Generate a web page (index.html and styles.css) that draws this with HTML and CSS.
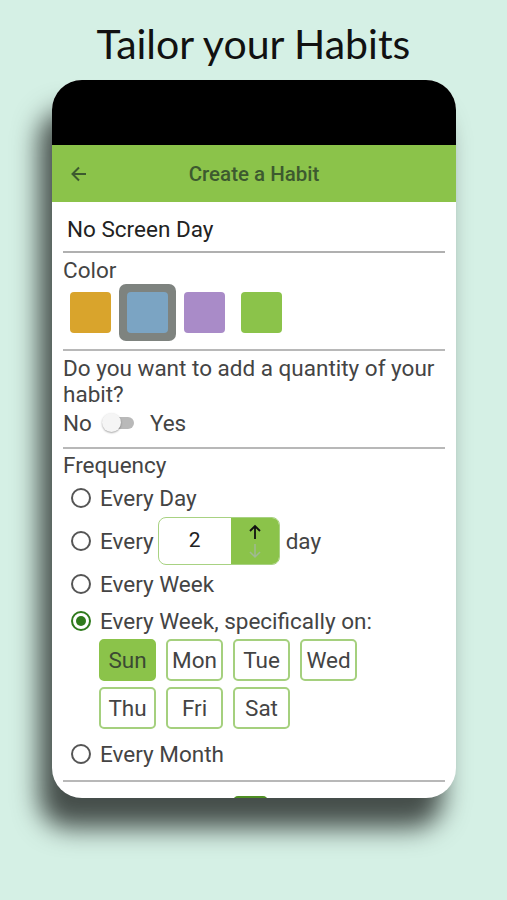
FILE: index.html
```html
<!DOCTYPE html>
<html>
<head>
<meta charset="utf-8">
<link rel="stylesheet" href="styles.css">
</head>
<body>
<h1 class="title">Tailor your Habits</h1>
<div class="phone">
  <div class="status"></div>
  <div class="appbar">
    <svg class="back" width="20" height="20" viewBox="0 0 20 20"><path d="M17 10H4M10 3.5L3.5 10L10 16.5" fill="none" stroke="#3d5a2f" stroke-width="2"/></svg>
    <span class="appbar-title">Create a Habit</span>
  </div>
  <div class="content">
    <div class="name-row">No Screen Day</div>
    <div class="section color-section">
      <div class="label">Color</div>
      <div class="swatches">
        <div class="swatch yellow"></div>
        <div class="swatch-sel"><div class="swatch blue"></div></div>
        <div class="swatch purple"></div>
        <div class="swatch green"></div>
      </div>
    </div>
    <div class="section qty-section">
      <div class="label">Do you want to add a quantity of your habit?</div>
      <div class="toggle-row">
        <span>No</span>
        <span class="switch"><span class="track"></span><span class="thumb"></span></span>
        <span>Yes</span>
      </div>
    </div>
    <div class="section freq-section">
      <div class="label">Frequency</div>
      <div class="radio-row r1"><span class="radio"></span>Every Day</div>
      <div class="radio-row r2"><span class="radio"></span>Every
        <span class="spinner"><span class="spin-val">2</span><span class="spin-btns">
          <svg width="14" height="16" viewBox="0 0 14 16"><path d="M7 15V2M2 7L7 2L12 7" fill="none" stroke="#111" stroke-width="1.8"/></svg>
          <svg width="14" height="16" viewBox="0 0 14 16"><path d="M7 1V14M2 9L7 14L12 9" fill="none" stroke="#a0b894" stroke-width="1.5"/></svg>
        </span></span>
        day</div>
      <div class="radio-row r3"><span class="radio"></span>Every Week</div>
      <div class="radio-row r4"><span class="radio checked"></span>Every Week, specifically on:</div>
      <div class="days">
        <span class="day on">Sun</span>
        <span class="day">Mon</span>
        <span class="day">Tue</span>
        <span class="day">Wed</span>
        <span class="day">Thu</span>
        <span class="day">Fri</span>
        <span class="day">Sat</span>
      </div>
      <div class="radio-row r5"><span class="radio"></span>Every Month</div>
    </div>
    <div class="peek"></div>
  </div>
</div>
</body>
</html>
```
FILE: styles.css
```css
html, body {
  margin: 0;
  padding: 0;
}
body {
  background: #d5f0e5;
  width: 507px;
  height: 900px;
  overflow: hidden;
  font-family: Roboto, "Liberation Sans", sans-serif;
}
.title {
  margin: 0;
  padding-top: 20px;
  height: 59px;
  box-sizing: border-box;
  text-align: center;
  font-family: Lato, "Open Sans", sans-serif;
  font-weight: 400;
  font-size: 41px;
  line-height: 48px;
  color: #111;
}
.phone {
  margin-left: 52px;
  margin-top: 21px;
  width: 404px;
  height: 718px;
  border-radius: 30px;
  overflow: hidden;
  background: #fff;
  box-shadow: -13px 30px 26px rgba(0, 0, 0, 0.68);
}
.status {
  height: 65px;
  background: #000;
}
.appbar {
  height: 57px;
  background: #8bc34a;
  display: flex;
  align-items: center;
  position: relative;
}
.back {
  margin-left: 17px;
}
.appbar-title {
  position: absolute;
  left: 0;
  right: 0;
  text-align: center;
  font-size: 20.5px;
  font-weight: 500;
  color: #3d5a2f;
  pointer-events: none;
}
.content {
  padding: 0 11px;
  color: #444;
  font-size: 22.5px;
  position: relative;
  height: 596px;
}
.name-row {
  height: 49px;
  line-height: 54px;
  padding-left: 4px;
  color: #222;
  border-bottom: 2px solid #b0b0b0;
}
.section {
  border-bottom: 2px solid #b8b8b8;
}
.label {
  line-height: 26px;
}
.color-section {
  height: 98px;
  padding-top: 4px;
  box-sizing: border-box;
}
.swatches {
  display: flex;
  align-items: center;
  gap: 8px;
  padding-left: 7px;
  margin-top: 1px;
}
.swatch {
  width: 41px;
  height: 41px;
  border-radius: 4px;
}
.swatch-sel {
  width: 41px;
  height: 41px;
  padding: 8px;
  border-radius: 7px;
  background: #7e837f;
}
.swatch-sel .swatch {
  width: 41px;
  height: 41px;
}
.yellow { background: #d9a42c; }
.blue { background: #7ba4c3; }
.purple { background: #a98bc8; }
.green { background: #8bc34a; margin-left: 8px; }
.qty-section {
  height: 98px;
  padding-top: 4px;
  box-sizing: border-box;
}
.toggle-row {
  display: flex;
  align-items: center;
  height: 30px;
  margin-top: 1px;
}
.switch {
  position: relative;
  width: 34px;
  height: 20px;
  margin: 0 14px 0 10px;
}
.track {
  position: absolute;
  left: 6px;
  top: 4px;
  width: 26px;
  height: 12px;
  border-radius: 6px;
  background: #b9b9b9;
}
.thumb {
  position: absolute;
  left: 0;
  top: 0;
  width: 19px;
  height: 19px;
  border-radius: 50%;
  background: #f5f5f5;
  box-shadow: 0 1px 2px rgba(0, 0, 0, 0.35);
}
.freq-section {
  height: 333px;
  padding-top: 3px;
  box-sizing: border-box;
}
.radio-row {
  display: flex;
  align-items: center;
  padding-left: 8px;
  height: 34px;
}
.radio {
  width: 16px;
  height: 16px;
  border: 2px solid #555;
  border-radius: 50%;
  margin-right: 9px;
  position: relative;
  flex: none;
}
.radio.checked {
  border-color: #2f7a1c;
}
.radio.checked::after {
  content: "";
  position: absolute;
  left: 3px;
  top: 3px;
  width: 10px;
  height: 10px;
  border-radius: 50%;
  background: #2f7a1c;
}
.r1 { margin-top: 3px; }
.r2 { height: 50px; margin-top: 1px; }
.r3 { margin-top: 1px; }
.r4 { margin-top: 3px; }
.spinner {
  display: flex;
  width: 122px;
  height: 48px;
  margin: 0 6px 0 4px;
  border: 1.5px solid #a8d282;
  border-radius: 8px;
  box-sizing: border-box;
  overflow: hidden;
}
.spin-val {
  width: 72px;
  text-align: center;
  line-height: 45px;
  color: #222;
  font-size: 21px;
}
.spin-btns {
  flex: 1;
  background: #8bc34a;
  display: flex;
  flex-direction: column;
  align-items: center;
  justify-content: center;
  gap: 3px;
}
.days {
  display: grid;
  grid-template-columns: repeat(4, 57px);
  column-gap: 10px;
  row-gap: 6px;
  padding-left: 36px;
  margin-top: 1px;
}
.day {
  height: 42px;
  border: 2px solid #a5d07e;
  border-radius: 5px;
  box-sizing: border-box;
  display: flex;
  align-items: center;
  justify-content: center;
  color: #444;
}
.day.on {
  background: #8bc34a;
  border-color: #8bc34a;
  color: #3b4a33;
}
.r5 { margin-top: 8px; }
.peek {
  position: absolute;
  left: 181px;
  top: 594px;
  width: 35px;
  height: 10px;
  border-radius: 5px;
  background: #4f8f23;
}
```
